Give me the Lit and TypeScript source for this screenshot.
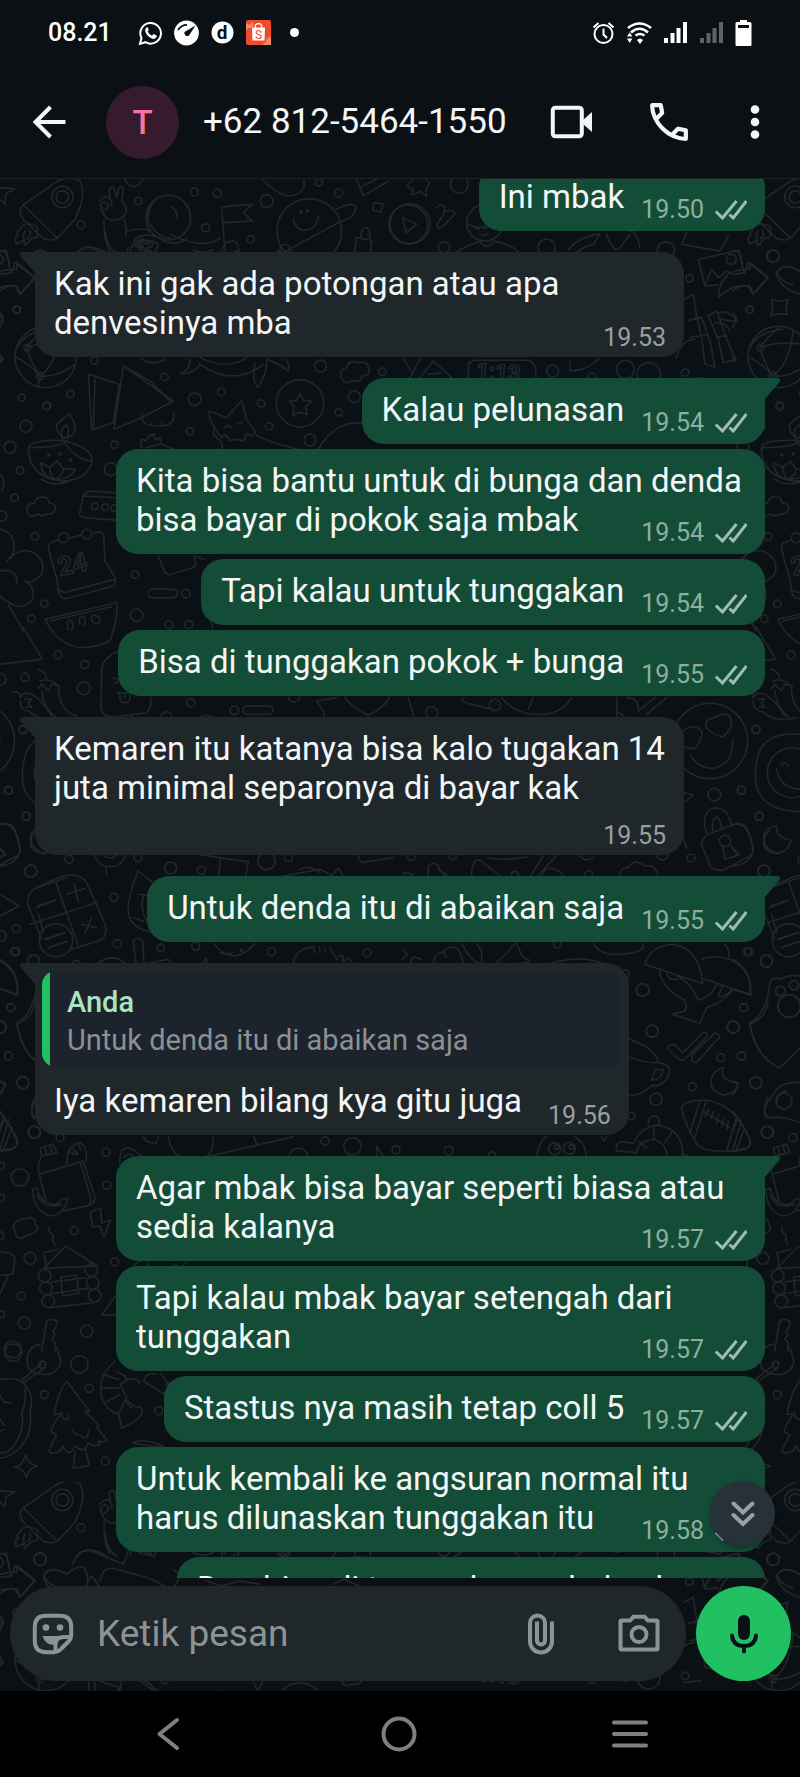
import { LitElement, html, css, svg, nothing } from "lit";
import { customElement, property } from "lit/decorators.js";
import { classMap } from "lit/directives/class-map.js";

interface Message {
  text: string;
  time: string;
  mine?: boolean;
  tail?: boolean;
  timeBelow?: boolean;
  quote?: { author: string; text: string };
}

const MESSAGES: Message[] = [
  { text: "Ini mbak", time: "19.50", mine: true },
  { text: "Kak ini gak ada potongan atau apa denvesinya mba", time: "19.53", tail: true },
  { text: "Kalau pelunasan", time: "19.54", mine: true, tail: true },
  { text: "Kita bisa bantu untuk di bunga dan denda bisa bayar di pokok saja mbak", time: "19.54", mine: true },
  { text: "Tapi kalau untuk tunggakan", time: "19.54", mine: true },
  { text: "Bisa di tunggakan pokok + bunga", time: "19.55", mine: true },
  {
    text: "Kemaren itu katanya bisa kalo tugakan 14 juta minimal separonya di bayar kak",
    time: "19.55",
    tail: true,
    timeBelow: true,
  },
  { text: "Untuk denda itu di abaikan saja", time: "19.55", mine: true, tail: true },
  {
    text: "Iya kemaren bilang kya gitu juga",
    time: "19.56",
    tail: true,
    quote: { author: "Anda", text: "Untuk denda itu di abaikan saja" },
  },
  { text: "Agar mbak bisa bayar seperti biasa atau sedia kalanya", time: "19.57", mine: true, tail: true },
  { text: "Tapi kalau mbak bayar setengah dari tunggakan", time: "19.57", mine: true },
  { text: "Stastus nya masih tetap coll 5", time: "19.57", mine: true },
  { text: "Untuk kembali ke angsuran normal itu harus dilunaskan tunggakan itu", time: "19.58", mine: true },
  { text: "Dan bisa di tunggakan pokok + bunga", time: "19.58", mine: true, timeBelow: true },
];

/* Wallpaper art: line drawings in thirds of a pixel, one sheet per area of the tile. */
interface Sheet {
  x: number;
  y: number;
  lines: string;
  rings: number[][];
}

const TILE_W = 733;
const TILE_H = 1303;

const SHEETS: Sheet[] = [
  {
    x: 0,
    y: -178,
    lines: `M70 612L165 545Q205 520 240 540Q262 580 225 655L172 712Q155 722 130 712L70 655Q58 640 62 622ZM70 612L172 712
      M85 668q-20 0-25 18q-15 5-5 15q-15 10-5 28l20-10 5 15 20-22q25 0 15-20q10-10-5-18zM75 690q-10 20 0 30M90 688q5 15-8 25
      M-5 560L45 563L18 578L15 610L-5 590
      M300 600q15-20 30-8L328 565q8-12 16 0L350 590L356 562q10-10 14 2L366 600q18 15 12 35Q365 660 335 658Q305 650 302 610q12-14 24 0q-2 16-14 16M326 592q14 4 8 22
      M312 655Q310 720 330 750M372 655q8 15 5 50M515 618q18 10 16 35M462 600Q440 630 445 660Q465 705 510 712
      M380 690Q420 680 445 688M400 720Q430 690 480 710Q510 740 560 715
      M665 618L757 610L730 635L757 660L670 665M665 618L675 750
      M880 655Q885 685 915 688Q950 685 955 648M1008 625Q1060 600 1068 618Q1065 650 1020 662Q950 700 850 755
      M1122 605L1150 608L1142 633L1118 628zM372 534Q400 580 430 534M785 534Q870 620 912 560V534M1070 534L1090 585L1165 540M1080 560L1130 534
      M1070 710l45 8-5 45-47-6zM1083 708q0-28 14-28q14 0 12 30`,
    rings: [[187,588,32],[187,588,19],[505,650,67],[583,573,12],[652,577,12],[415,600,11],[243,671,12],[617,680,12],[800,600,19],[1016,576,12],[957,544,11],[928,690,97],[903,633,3],[922,630,3],[1225,670,58]],
  },
  {
    x: 400,
    y: -178,
    lines: `M40 534L20 555L40 565L35 582L60 572L78 585L80 560L90 545L75 534M8 650L50 670L18 695z
      M110 620q15-18 25 0l-3 12 12-4q22 0 20 12L125 680q-18 5-12-12l22-35M200 668q60 30 85-25M225 680l12 5M250 682l12-2M240 700q15 8 25-3
      M245 720Q200 730 160 760M280 720Q340 730 360 760M240 722q20 28 42 0
      M505 745Q550 700 600 700L580 730Q540 740 520 765M620 700Q640 760 660 740L690 700M720 740Q710 690 690 690
      M860 695L845 730L960 750L985 705`,
    rings: [[178,550,27],[30,668,60],[255,665,55],[132,740,17],[440,740,26],[798,748,26]],
  },
  {
    x: 0,
    y: 52,
    lines: `M390 66Q395 30 425 28Q470 25 475 45L460 70M230 66Q260 30 320 66M665 66q5-38 35-35q20 5 15 35M850 66L832 60M315 0Q320 50 350 66M510 10Q620 60 660 20
      M0 60Q20 50 28 100M0 130Q30 125 35 125L45 95L103 140L60 190L45 165Q20 160 0 180M0 245L10 260L0 290M0 370L10 385L0 395
      M50 350Q80 300 150 295M80 350Q130 330 210 340M50 380Q90 400 120 435Q170 440 225 400M80 350Q95 400 120 435M80 350Q110 310 140 290M120 435Q170 400 180 300M120 435L115 465
      M265 430L357 460L340 575L275 597ZM285 445L280 590M370 405L490 490L520 510L425 560L342 595ZM370 405L450 450L515 515
      M427 545v20Q432 585 474 585Q520 585 521 560v-15M455 575v10M485 575v10M427 385q30 20 70 0
      M540 428Q570 420 570 385M540 428Q580 430 600 400Q700 470 790 400M600 380Q680 420 740 380M765 395Q755 460 775 468Q800 430 800 390M800 385Q840 400 865 420Q870 400 855 385
      M900 487l10 20 25 3-18 18 5 23-22-8-22 10 5-25-15-17 22-3z
      M1030 450q-20-30 10-40q5-25 35-15q30-5 30 15q10 25-20 25q0 20-30 15q-15 10-25 0z
      M628 540L680 560L725 508L740 565L765 600Q750 620 905 658M628 540Q625 570 645 590L640 610L665 635L668 658M650 600l15 20 10-10 15 20 20-5 20 5 10-20 20 5M675 590q10-10 20 0M710 580q10-10 18 0M955 655Q1010 560 1100 578
      M85 650Q90 625 190 628Q275 650 277 688Q265 750 180 750Q85 735 85 650M85 650Q180 650 200 630M190 628Q230 690 277 690
      M190 622Q165 600 170 580L208 548Q225 570 225 595Q222 620 190 622zM190 622q-15-25 10-40q12 25-2 40
      M122 695L150 710L172 690L190 715L225 715Q215 745 165 745Q125 740 122 695M150 710Q150 735 165 745Q185 735 190 715M125 745Q165 770 208 750
      M425 650L422 625L440 630L445 615L462 610L465 625L480 622L485 640L520 655M440 650L480 640
      M80 840q0-25 22-22q5-20 25-20q20 0 20 18q20 0 20 18q-5 18-25 15q-15 10-28 0q-30 15-34-9z
      M238 850L250 795L262 780L350 785M250 795L350 800M238 850q0 8 20 10L350 868
      M145 945Q145 935 175 928M205 922L245 912M275 907L300 903Q312 905 312 930L315 990L345 1040Q350 1060 340 1065L200 1103Q180 1105 175 1080L170 1040Q150 980 145 945M175 1075Q190 1090 210 1080L345 1045
      M20 990Q60 945 100 965Q140 990 125 1030Q90 1065 75 1050Q110 1070 95 1110Q60 1140 30 1115Q-10 1100 -5 1070M0 895Q60 910 35 980M50 1060Q55 1010 0 1020M25 1120L70 1200M0 730Q20 745 5 780
      M457 1075h62a12 12 0 0 1 0 25h-62a12 12 0 0 1 0-25zM475 975L495 1025Q505 1035 520 1028L585 1008Q590 990 580 975M585 975L612 985M610 1045L625 1040M615 1155L630 1160L640 1200
      M135 1165L350 1115Q355 1160 330 1230Q290 1250 240 1250Q170 1240 135 1165M150 1170L335 1127M205 1195q-8-30 6-28q14 10 4 30M240 1180q-6-25 8-25q16 16 2 28M275 1170q-4-18 10-18q20 10 14 24q-12 6-24-6`,
    rings: [[137,378,92],[82,350,10],[120,435,11],[50,236,11],[283,388,11],[494,438,11],[65,500,11],[140,525,11],[211,489,11],[78,586,18],[584,505,19],[664,483,11],[570,601,11],[343,641,11],[783,517,11],[807,586,11],[1016,544,11],[930,627,18],[1063,497,18],[961,405,18],[1147,422,11],[30,649,18],[60,718,11],[44,800,11],[332,715,19],[105,916,11],[405,1031,11],[410,1153,19],[133,1118,11],[94,1163,11],[558,1088,13],[507,1181,12],[566,1181,12],[4,855,16],[752,25,11],[900,517,71],[284,826,10],[315,829,10],[343,831,10],[146,672,3],[180,669,3],[211,687,3],[190,920,15],[260,910,15],[855,55,15]],
  },
  {
    x: 400,
    y: 52,
    lines: `M895 85L1018 58L1030 120M895 85L915 165L955 162M915 160L935 115L955 140L980 120L990 125M955 200Q960 110 1050 115L1050 95L1105 140L1060 190L1050 165Q1000 155 955 200
      M1130 125Q1150 90 1200 120M1130 125Q1135 170 1200 190M1115 205Q1140 215 1165 205Q1155 230 1162 250Q1140 245 1112 255Q1122 230 1115 205
      M852 205L880 190L890 255L905 320L915 400L945 408L930 330L905 260L885 260M865 268L900 262M870 320L925 310M925 255L950 240L975 310L1005 385L970 395L955 325L925 255M950 320L978 312M955 245Q990 235 1010 270Q980 270 955 262M945 275Q975 270 990 300
      M830 380Q840 330 885 325M510 390V420Q560 420 595 385M205 440V400Q215 385 240 388H385Q410 395 408 440M10 385L40 430M60 385L30 440M60 440L100 390L155 440M85 430L125 425
      M850 445L905 440`,
    rings: [[868,142,11],[994,85,15],[1120,76,18],[1050,236,11],[855,425,11],[458,420,18],[676,415,27],[746,430,35],[575,437,11],[1140,525,11]],
  },
  {
    x: 0,
    y: 452,
    lines: `M70-10L128 85L0 100M60 200Q70 180 95 190Q130 210 155 255M60 210Q60 240 90 242Q120 275 190 260M120 150Q150 140 175 165Q175 240 230 255M125 180Q130 230 170 262M115 115q20 5 25 28M115 172l10-12 20 20 10-20 24 4M38 182q20 0 28 15M75 205l20 0-10 12 10 12-18 0
      M330 75Q340 60 385 60M330 75Q305 90 305 120L303 230Q305 258 340 258L440 245Q455 235 452 200M340 140l20 6-16 12M352 185h40M360 190v10q0 15 15 15q15 0 15-15v-10M375 190v12M365 258v10M395 255v10
      M742 225h64a12 12 0 0 1 0 25h-64a12 12 0 0 1 0-25zM950 210L970 240L975 262M950 210L1010 200M1035 200Q1060 235 1105 252Q1150 235 1168 200M480 262q5-20 20-20q18 0 14 20M600 260q20-15 40 0
      M110 600Q85 620 95 650Q110 670 140 668M0 580Q50 570 60 660Q50 700 0 705M0 655L15 668L0 680M0 790L57 825L0 855M318 710L320 730M605 672L745 692M662 682L656 735M745 690L738 735M820 740L960 715L1000 735M995 735L1015 712L1030 735M900 715q30-15 60 10M1075 675q5 25 20 18L1180 680
      M110 770L180 738Q235 720 260 755L315 880Q325 920 295 930L215 955M110 770Q80 785 83 820L125 925M168 755L235 945M90 880L290 815M110 830L165 808M200 790L255 772M222 757L235 812M245 880L290 890M275 860L255 908M135 925L195 905M145 950L200 932
      M415 720Q380 800 385 850Q400 900 470 905M415 720L455 752L485 750M415 790l40 5q-5 40 5 60M430 795q-10 40 10 75M400 860l30 10
      M400 930q15-15 28 0L432 1000M400 930L408 1000M440 998L505 985L515 1000M605 998L618 982L622 1000M290 1000Q340 960 378 1000M880 998Q885 950 945 948M990 950L1010 985q10-18 20-8l-2 15 20-12 10 18M940 950l5 15M958 948l2 15M975 950l0 12
      M640 938Q700 1010 765 938M660 965q25 10 40-2M0 985Q60 1020 50 1090L0 1075`,
    rings: [[174,72,12],[254,101,12],[75,139,12],[251,172,19],[0,145,18],[68,295,12],[572,215,12],[703,238,13],[882,195,18],[25,478,12],[78,556,12],[207,685,12],[92,720,18],[342,799,12],[512,711,18],[604,718,12],[414,680,12],[800,690,26],[865,680,12],[49,893,12],[4,915,15],[44,962,12],[100,990,18],[352,938,12],[482,950,11],[587,946,12],[815,962,12],[1101,965,12],[230,1000,12],[725,958,4],[168,928,50],[330,660,48],[330,655,26]],
  },
  {
    x: 400,
    y: 452,
    lines: `M25 200L42 260M185 200q0 15 30 20l60 15M305 200Q350 255 430 250Q490 245 515 200M400 200L385 235M650 260V200M650 240L680 262M680 200Q720 200 715 240M715 240L765 200M740 250L800 200
      M850 300Q880 275 905 300Q910 325 885 352Q865 355 848 345M918 290Q915 262 940 262Q955 250 985 250Q1005 280 985 300L970 318Q940 312 918 290M870 370Q890 410 935 412Q1000 405 998 325
      M1200 310Q1100 300 1075 370Q1055 450 1080 490Q1110 540 1200 542M1143 405q12-18 22 0M1130 415Q1140 470 1200 475
      M852 485L880 492L855 512M860 650L850 620M905 640Q905 620 925 610L1010 578Q1035 575 1045 600L1060 650Q1060 675 1040 680L970 718Q945 722 930 705ZM920 608Q905 560 925 540Q950 520 980 545L995 580M938 600Q935 560 950 558Q960 560 965 590M968 645L975 685L1017 672L988 640
      M1130 585Q1125 620 1175 628Q1160 670 1125 665Q1085 650 1092 610Q1105 585 1130 585
      M262 680Q290 690 380 678M390 738L430 675M410 738L468 675M425 738q5-30 35-25q25 5 30 25M85 738V705q20-20 35 10l15 22M115 715L150 738M215 738Q215 680 240 688L300 735M12 738V725L38 730V738M540 675q15 20 40 5M655 738Q665 705 685 710Q700 680 735 705Q770 700 775 738
      M1112 825L1165 808M1115 850L1130 905M1100 960M1135 925L1195 905M1145 950L1195 932M1110 770L1200 740
      M735 1000Q750 945 820 940Q900 955 908 1058ZM905 985Q940 970 990 985Q1060 1020 1052 1092L915 1045M778 1018Q785 1070 850 1105Q865 1120 855 1140L815 1150L900 1177L920 1130Q980 1110 1000 1072M800 1030Q810 1050 835 1045M830 1035Q870 1050 895 1108Q930 1100 950 1060M955 1095Q965 1070 970 1065M960 1098Q990 1090 995 1075M975 940q15 20 12 38
      M10 955l12 15-15 15M30 998L40 978 65 985M100 998Q105 960 130 965q10-20 30-15Q180 945 190 998M130 960l10 20M185 938Q220 1000 245 998V960L230 938M290 995Q320 970 345 938M350 938Q370 990 385 985Q390 998 350 998M580 938Q600 975 660 970Q740 965 728 938M450 998Q540 970 610 998`,
    rings: [[95,245,18],[285,222,17],[930,330,113],[1177,425,75],[943,491,19],[1025,478,12],[1068,296,12],[1078,556,12],[975,630,17],[873,681,12],[1092,720,18],[345,732,11],[566,730,11],[787,670,17],[34,676,12],[158,675,11],[1046,962,12],[1100,990,18],[728,1077,19],[1032,1130,12],[1000,1188,18],[757,1200,18],[1141,1080,14],[1182,1063,14],[1168,1125,34],[675,1028,12],[472,940,11]],
  },
  {
    x: 0,
    y: 772,
    lines: `M105 150Q100 200 50 220Q70 300 105 330M0 390L15 400Q10 420 0 430M105 440Q85 480 105 500M0 480L50 560Q55 590 40 592L0 600M15 500L0 540M35 530L10 597
      M122 590L160 580L170 605L125 615ZM135 587l5 25M150 583l6 25M125 615Q110 640 118 670L250 630L285 740Q285 760 260 765L190 780M118 670L138 750M240 632L272 740Q275 755 262 765M200 640Q200 580 240 575Q265 590 258 630M205 600l25 12M215 588l18 20M235 578l8 20
      M98 715Q100 780 150 795Q195 790 203 742L185 745Q170 770 140 755Q115 740 112 712ZM110 730Q130 780 185 760
      M55 810q5-10 20-5l10-5q15-3 20 10l8 25q-5 8-15 12l-35 15q-10 0-15-10l-8-25q5-15 15-17zM270 785L302 772L305 815L332 808L312 858L300 825L278 828ZM148 828q-5 15 8 22q8 8 0 18l10 14
      M132 952L197 885L290 945ZM140 955L132 905L175 895M155 993L258 980M155 1028L265 1012M150 1070L280 1055M182 978l48-6 6 55-48 8zM0 902Q40 905 45 920L38 970L0 972M25 972L0 1030M305 1092L350 1030M305 1092H350
      M125 1200L140 1110Q155 1100 172 1112L165 1135 158 1140 165 1150 155 1165 165 1175 165 1200M90 1200q5-15 30-20
      M360 640Q355 590 385 590Q410 600 430 618M370 620Q390 600 400 618M505 557Q510 600 540 617M640 557Q640 600 620 617L880 557M762 557L770 580M430 557Q440 580 470 575L475 557M865 617q10-25 30-25q25 0 30 25M1130 617V585L1150 617
      M400 945L420 930M440 935l10 12M545 945l15-12M520 940l20 8`,
    rings: [[32,170,12],[0,228,18],[25,315,12],[68,395,18],[102,544,18],[180,560,12],[318,604,12],[60,679,26],[321,703,12],[223,839,12],[0,645,12],[0,741,12],[0,854,12],[90,922,18],[344,933,12],[64,1035,12],[73,1116,18],[260,1140,18],[134,974,19],[274,957,19],[138,1012,19],[278,996,19],[145,1051,19],[284,1034,19],[38,1195,25],[4,1090,10],[975,570,12],[1057,586,26],[1188,596,12]],
  },
  {
    x: 400,
    y: 772,
    lines: `M690 265Q760 290 775 330Q770 345 690 320M775 335Q815 340 808 365Q795 405 760 405M690 435Q730 430 760 400M765 355L790 358Q785 385 755 388ZM808 285q15-10 20 0l20 20 60-60q15-5 12 12l-65 68q-10 8-20-2l-30-28q-4-6 3-10zM875 320q0-8 8-15l60-58q15-3 15 12l-65 72q-18 10-18-11zM900 308
      M970 350Q955 390 1015 395Q1010 430 970 432Q925 420 935 380Q945 355 970 350
      M845 470Q855 445 920 448Q1010 460 1052 575Q1050 600 990 600Q900 605 885 570Q850 510 845 470M900 450L870 545M918 452L885 560M1010 495L980 600M1025 505L998 600M912 482L990 530M925 475l-10 22M940 482l-8 22M957 492l-8 25M972 502l-8 25M985 512l-5 25
      M650 600q-5-25 15-28l35 5Q720 530 770 522Q830 530 845 580L850 617M745 520q0-25 18-25q18 0 15 30M650 600L710 605Q715 570 765 565Q800 580 802 617M715 572L740 590M762 525V565M815 545L795 575M845 610l20 5M410 617Q420 560 440 557M525 557Q560 580 558 617
      M1110 95Q1120 75 1145 85Q1160 70 1200 75M1110 95Q1100 190 1050 215Q1060 310 1138 352Q1190 300 1200 290M1200 395Q1140 390 1120 430Q1080 480 1100 500Q1150 495 1200 515M1130 460q0-35 30-40M605 557l8 12 8-12`,
    rings: [[728,117,19],[757,241,18],[768,445,18],[1000,228,18],[1024,315,12],[962,320,12],[877,407,12],[1068,395,18],[1103,544,18],[694,495,11],[464,593,18],[508,592,18],[470,588,7],[514,588,7],[146,599,13],[277,613,11],[1141,120,14],[1182,102,14],[1168,165,34],[1152,450,24]],
  },
  {
    x: 0,
    y: 1172,
    lines: `M85 50Q75 10 95-10M85 50Q100 75 150 70Q190 50 180 20L170-10M135 50L70 95M125 38L65 88M0 85Q50 75 75 100Q105 140 90 180Q100 250 60 290Q30 320 0 322M75 110Q80 150 65 185Q75 230 50 270Q30 310 0 305M0 135l12 18 20 2M0 205l15 20M0 240l12-5
      M200 90Q175 120 162 190Q180 190 185 185Q150 230 155 245L170 250L147 300Q150 312 180 300L190 285Q200 310 215 302L225 285Q240 300 255 295L265 275Q280 290 300 280L295 270Q310 275 322 268L290 230L298 225L255 180L270 182ZM185 190q5 20 20 15l0-15M218 235q5 20 25 18q0 12 20 5l2-20M225 300L220 352L268 345L255 290
      M345 30Q290 80 305 140Q320 180 355 190L380 140L360 100L380 90L375 75L350 62M305 70l50 15M303 110l55 0M315 155l45-25M355 185L365 230Q400 220 425 190Q430 160 410 170L380 150M380 155L395 170M380 85Q420 80 418 100M430 90Q440 60 470 70M430 90Q460 110 510 140M480 65L510 105
      M398 275Q430 260 490 285Q470 290 398 275M43 348Q70 345 76 312Q85 340 112 345Q85 352 80 380Q72 352 43 348`,
    rings: [[40,5,26],[238,40,26],[127,41,10],[133,131,12],[267,112,12],[316,330,12],[476,179,12],[505,100,6]],
  },
  {
    x: 0,
    y: -131,
    lines: `M217 640Q240 590 275 600L370 640L385 600M130 680Q140 640 200 670Q260 620 262 680Q270 710 240 710M135 680Q150 705 180 710M262 690L275 675L300 708M300 690Q310 640 350 655L440 680Q490 700 500 710M520 655l20 20-15 30M620 690L665 705 720 690 780 700M580 605q30 15 60 0M700 615l15-10M1000 700l30-15 50 20`,
    rings: [[120,625,19]],
  },
];

const ringPath = ([cx, cy, r]: number[]) =>
  `M${cx - r} ${cy}a${r} ${r} 0 1 0 ${2 * r} 0a${r} ${r} 0 1 0 ${-2 * r} 0`;

const sheetArt = (dx: number) => svg`
  <g transform="translate(${dx} 0)">
    ${SHEETS.map(
      (s) => svg`<path transform="translate(${s.x} ${s.y}) scale(.3333)" d="${s.lines} ${s.rings.map(ringPath).join("")}"/>`
    )}
    <text class="doodle" font-size="26" transform="translate(60 397) rotate(-12)">24</text>
    <text class="doodle" font-size="16" transform="translate(134 70) rotate(12)">42</text>
    <text class="doodle" font-size="22" transform="translate(476 199) rotate(4)">1:13</text>
  </g>`;

@customElement("chat-wallpaper")
export class ChatWallpaper extends LitElement {
  static styles = css`
    :host {
      position: absolute;
      inset: 0;
      overflow: hidden;
    }
    .art {
      display: block;
      width: 100%;
      height: 100%;
    }
    .tile {
      fill: none;
      stroke: #21272b;
      stroke-width: 4.5;
      stroke-linejoin: round;
      stroke-linecap: round;
    }
    .doodle {
      font-family: Roboto, sans-serif;
      font-weight: 700;
      stroke-width: 1.4;
    }
  `;
  render() {
    return html`<svg class="art" aria-hidden="true">
      <defs>
        <pattern id="tile" width=${TILE_W} height=${TILE_H} patternUnits="userSpaceOnUse">
          <g class="tile">${[-TILE_W, 0, TILE_W].map(sheetArt)}</g>
        </pattern>
      </defs>
      <rect width="100%" height="100%" fill="url(#tile)" />
    </svg>`;
  }
}

@customElement("chat-bubble")
export class ChatBubble extends LitElement {
  @property({ attribute: false }) message!: Message;

  static styles = css`
    :host {
      display: flex;
      padding: 0 35px;
    }
    .bubble {
      position: relative;
      display: flow-root;
      max-width: 649px;
      box-sizing: border-box;
      padding: 12px 18px 4px 19px;
      border-radius: 22px;
      background: #1f272a;
      color: #f3f5f6;
      font-size: 33px;
      line-height: 39px;
    }
    .mine {
      margin-left: auto;
      padding: 12px 18px 6px 20px;
      background: #144d37;
    }
    .tail {
      border-top-left-radius: 0;
    }
    .mine.tail {
      border-top-left-radius: 22px;
      border-top-right-radius: 0;
    }
    .quoting {
      padding-top: 8px;
    }
    .beak {
      position: absolute;
      top: 0;
      right: 100%;
      width: 15px;
      height: 22px;
      fill: #1f272a;
    }
    .mine .beak {
      right: auto;
      left: 100%;
      fill: #144d37;
      transform: scaleX(-1);
    }
    .meta {
      float: right;
      display: flex;
      align-items: center;
      gap: 11px;
      margin: 20px 0 0 26px;
      color: #9b9fa2;
      font-size: 25px;
      line-height: 30px;
    }
    .mine .meta {
      margin: 18px 0 0 17px;
      color: #8caf9f;
    }
    .below .text {
      display: block;
    }
    .below .meta {
      margin-top: 14px;
    }
    .ticks {
      width: 32px;
      height: 20px;
      fill: none;
      stroke: #a0bdb1;
      stroke-width: 3;
    }
    .quote {
      margin: 0 -11px 14px -12px;
      padding: 12px 20px 7px 25px;
      border-radius: 14px;
      background: linear-gradient(to right, #21c063 8px, #1d232c 8px);
      color: #8b9094;
      font-size: 29px;
      line-height: 38px;
    }
    .author {
      display: block;
      color: #a9e4c0;
      font-weight: 500;
    }
    .quoted {
      display: block;
      line-height: 39px;
    }
  `;

  render() {
    const m = this.message;
    const cls = { bubble: true, mine: !!m.mine, tail: !!m.tail, below: !!m.timeBelow, quoting: !!m.quote };
    return html`<div class=${classMap(cls)}>${m.tail
      ? html`<svg class="beak" viewBox="0 0 15 22" aria-hidden="true"><path d="M15 0H3Q-1.500 0 .8 4.500L15 21z" /></svg>`
      : nothing}${m.quote
      ? html`<div class="quote"><span class="author">${m.quote.author}</span><span class="quoted">${m.quote.text}</span></div>`
      : nothing}<span class="text">${m.text}</span><span class="meta"><time>${m.time}</time>${m.mine
      ? html`<svg class="ticks" viewBox="0 0 32 20" role="img" aria-label="Terkirim">
          <path d="M.8 11.500L7.500 18L21.500 1M14.500 14.500L18.200 18L31.500 1" />
        </svg>`
      : nothing}</span></div>`;
  }
}

@customElement("status-bar")
export class StatusBar extends LitElement {
  static styles = css`
    :host {
      display: flex;
      align-items: center;
      justify-content: space-between;
      height: 66px;
      padding: 0 48px;
      color: #fff;
      font-size: 25px;
      font-weight: 500;
      line-height: 28px;
    }
    .side {
      display: flex;
      align-items: center;
      gap: 11px;
    }
    .clock {
      margin-right: 15px;
    }
    .icon {
      display: block;
      width: 25px;
      height: 26px;
      fill: currentColor;
    }
    .battery {
      width: 17px;
    }
    .line {
      fill: none;
      stroke: currentColor;
      stroke-width: 2;
    }
    .dim {
      opacity: 0.35;
    }
    .letter {
      font-weight: 700;
      fill: #0b1014;
    }
    .s {
      font-weight: 400;
      fill: #ee4d2d;
    }
  `;
  render() {
    const bars = svg`<path d="M1 18h4v5H1zM7.500 13h4v10h-4zM13.500 8h4v15h-4zM20 2h4v21h-4z"/>`;
    return html`
      <div class="side">
        <time class="clock">08.21</time>
        <svg class="icon" viewBox="0 0 25 26" aria-label="WhatsApp" role="img">
          <path class="line" d="M2 23.800L3.500 18A10.300 10.300 0 1 1 7.500 22.200z" />
          <path d="M8.500 7.500q-2 1.500-1.200 4.200q2 5.500 7.700 7.200q2.800.3 3.800-2.300l-.2-1.200-3-1.300-1.600 1.600q-3-1.200-4.400-4.100l1.200-1.500-1.200-2.800z" />
        </svg>
        <svg class="icon" viewBox="0 0 25 26" aria-hidden="true">
          <circle cx="12.500" cy="13" r="12.400" />
          <path d="M4 10Q7 4.800 13 4.800" fill="none" stroke="#0b1014" stroke-width="1.800" />
          <path d="M21.500 5.500L15 15.500A3 3 0 0 1 10.500 12z" fill="#0b1014" />
        </svg>
        <svg class="icon" viewBox="0 0 25 26" aria-hidden="true">
          <circle cx="12.500" cy="12.500" r="11" />
          <text class="letter" x="12" y="19" font-size="19" text-anchor="middle">d</text>
        </svg>
        <svg class="icon" viewBox="0 0 25 26" aria-hidden="true">
          <rect x="0" y="0" width="25" height="25" rx="2" fill="#ee4d2d" />
          <path d="M0 3l3 2 3-3 2 3-3 3-3 0-2 3zM25 17l-4 1-1 4-4 3h9z" fill="#f58a6c" />
          <path d="M6 7.500H19L18.500 20.500H6.500z" />
          <path d="M9.200 8V7a3.300 3.300 0 0 1 6.600 0v1" fill="none" stroke="#fff" stroke-width="1.200" />
          <text class="s" x="12.500" y="18.500" font-size="12" text-anchor="middle">S</text>
        </svg>
        <svg class="icon" viewBox="0 0 25 26" aria-hidden="true"><circle cx="12.500" cy="12.500" r="4.500" /></svg>
      </div>
      <div class="side">
        <svg class="icon" viewBox="0 0 25 26" role="img" aria-label="Alarm">
          <circle class="line" cx="12.500" cy="14" r="9" />
          <path class="line" d="M12.500 8.500V14.500L16 18M2.500 7.500L7.500 3M22.500 7.500L17.500 3" />
        </svg>
        <svg class="icon" viewBox="0 0 25 26" role="img" aria-label="Wi-Fi">
          <path d="M1 8Q12.500-1 24 8M4 12.500Q12.500 5 21 12.500M8.500 15.500Q13 12.500 17.500 15.500" fill="none" stroke="currentColor" stroke-width="2.600" />
          <path d="M10 20q3-3 6 0l-3 4zM0 16.500L2.700 12.500L5.400 16.500zM0 18.500h5.400L2.700 23z" />
        </svg>
        <svg class="icon" viewBox="0 0 25 26" role="img" aria-label="Sinyal 1">${bars}</svg>
        <svg class="icon dim" viewBox="0 0 25 26" role="img" aria-label="Sinyal 2">${bars}</svg>
        <svg class="icon battery" viewBox="4 0 17 26" role="img" aria-label="Baterai">
          <path fill-rule="evenodd" d="M9 0h7v2h3q1.500 0 1.500 1.500v21q0 1.500-1.500 1.500H6q-1.500 0-1.500-1.500v-21Q4.500 2 6 2h3zM7 5v3h11V5z" />
        </svg>
      </div>
    `;
  }
}

@customElement("app-root")
export class AppRoot extends LitElement {
  static styles = css`
    :host {
      display: flex;
      flex-direction: column;
      height: 100vh;
      overflow: hidden;
      background: #0b1014;
      font-family: Roboto, sans-serif;
      color: #f3f5f6;
    }
    button {
      display: grid;
      place-items: center;
      flex: none;
      margin: 0;
      padding: 0;
      border: 0;
      background: none;
      color: inherit;
      font: inherit;
      cursor: pointer;
    }
    svg {
      display: block;
    }
    .header {
      display: flex;
      align-items: center;
      height: 112px;
      padding: 0 26px 0 27px;
      border-bottom: 1px solid #1c2226;
    }
    .back {
      width: 44px;
    }
    .avatar {
      display: grid;
      place-items: center;
      flex: none;
      width: 73px;
      height: 73px;
      margin: 0 24px 0 35px;
      border-radius: 50%;
      background: #361a2d;
      color: #fc72a2;
      font-size: 33px;
      font-weight: 500;
    }
    .name {
      flex: 1;
      margin: 0;
      font-size: 35px;
      font-weight: 400;
      line-height: 42px;
      white-space: nowrap;
    }
    .actions {
      display: flex;
      align-items: center;
      gap: 56px;
    }
    .stage {
      position: relative;
      display: flex;
      flex: 1;
      flex-direction: column;
      min-height: 0;
    }
    .chat {
      position: relative;
      flex: 1;
      min-height: 0;
      overflow: hidden;
    }
    .list {
      display: flex;
      flex-direction: column;
      gap: 5px;
      margin: -14px 0 0;
      padding: 0;
    }
    .turn {
      margin-top: 16px;
    }
    .jump {
      position: absolute;
      right: 25px;
      bottom: 32px;
      width: 65px;
      height: 65px;
      border-radius: 50%;
      background: #26313a;
      box-shadow: 0 2px 5px rgba(0, 0, 0, 0.35);
      color: #999fa4;
    }
    .composer {
      position: relative;
      display: flex;
      align-items: center;
      gap: 10px;
      padding: 8px 9px 10px 10px;
    }
    .field {
      display: flex;
      align-items: center;
      flex: 1;
      min-width: 0;
      height: 95px;
      box-sizing: border-box;
      padding: 0 24px 0 20px;
      border-radius: 48px;
      background: #1f272a;
      color: #8c9397;
    }
    .input {
      flex: 1;
      min-width: 0;
      padding: 0;
      margin-left: 21px;
      border: 0;
      outline: 0;
      background: none;
      color: #f3f5f6;
      font: 400 37px/44px Roboto, sans-serif;
    }
    .input::placeholder {
      color: #8c9397;
      opacity: 1;
    }
    .attach {
      margin-right: 52px;
    }
    .mic {
      width: 95px;
      height: 95px;
      border-radius: 50%;
      background: #21c063;
      color: #0b1014;
    }
    .nav {
      display: grid;
      grid-template-columns: repeat(3, 1fr);
      height: 86px;
      padding: 0 54px 0 52px;
      background: #000;
      color: #7f7f7f;
    }
  `;

  render() {
    return html`
      <status-bar></status-bar>
      <header class="header">
        <button class="back" aria-label="Kembali">
          <svg width="34" height="34" viewBox="0 0 34 34" fill="none" stroke="currentColor" stroke-width="4"><path d="M18.500 2L3.500 17L18.500 32M3.500 17H33.500" /></svg>
        </button>
        <div class="avatar" aria-hidden="true">T</div>
        <h1 class="name">+62 812-5464-1550</h1>
        <div class="actions">
          <button aria-label="Panggilan video">
            <svg width="43" height="34" viewBox="0 0 43 34"><rect x="2.800" y="2.800" width="29" height="28.400" rx="2.500" fill="none" stroke="currentColor" stroke-width="4" /><path d="M33 15L42 7V27L33 19z" fill="currentColor" /></svg>
          </button>
          <button aria-label="Panggilan suara">
            <svg width="40" height="40" viewBox="2.500 2.500 19 19" fill="currentColor"><path d="M19.950 21q-3.125 0-6.175-1.362t-5.550-3.863-3.862-5.550T3 4.050q0-.45.3-.75t.75-.3H8.100q.35 0 .625.238t.325.562l.65 3.500q.05.4-.025.675T9.400 8.450L6.975 10.900q.5.925 1.187 1.787t1.513 1.663q.775.775 1.625 1.438T13.100 17l2.350-2.350q.225-.225.588-.337t.712-.063l3.450.7q.35.1.575.363T21 15.900v4.050q0 .45-.3.75t-.75.3M6.025 9l1.650-1.650L7.250 5H5.025q.125 1.025.35 2.025T6.025 9m8.950 8.950q.975.425 1.988.675T19 18.950v-2.200l-2.350-.475z" /></svg>
          </button>
          <button aria-label="Menu lainnya">
            <svg width="29" height="34" viewBox="5 0 29 34" fill="currentColor"><circle cx="15" cy="4.500" r="4.300" /><circle cx="15" cy="17" r="4.300" /><circle cx="15" cy="29.500" r="4.300" /></svg>
          </button>
        </div>
      </header>
      <main class="stage">
        <chat-wallpaper></chat-wallpaper>
        <section class="chat" aria-label="Percakapan">
          <div class="list">
            ${MESSAGES.map((m) => html`<chat-bubble class=${classMap({ turn: !!m.tail })} .message=${m}></chat-bubble>`)}
          </div>
          <button class="jump" aria-label="Gulir ke bawah">
            <svg width="24" height="26" viewBox="0 0 24 26" fill="none" stroke="currentColor" stroke-width="4" stroke-linecap="round"><path d="M2.500 2.500L12 11.500L21.500 2.500M2.500 14L12 23L21.500 14" /></svg>
          </button>
        </section>
        <form class="composer" @submit=${(e: Event) => e.preventDefault()}>
          <div class="field">
            <button type="button" aria-label="Stiker">
              <svg width="46" height="46" viewBox="0 0 46 46">
                <path d="M16 4.800H30Q41.200 4.800 41.200 16V24Q41.200 28 38 31L31 38Q28 41.200 24 41.200H16Q4.800 41.200 4.800 30V16Q4.800 4.800 16 4.800z" fill="none" stroke="currentColor" stroke-width="4" />
                <circle cx="16" cy="16.500" r="3.300" fill="currentColor" /><circle cx="30" cy="16.500" r="3.300" fill="currentColor" />
                <path d="M12.500 25H35Q26 26 25 34Q15 34 12.500 25z" fill="currentColor" />
                <path d="M25.500 41V34Q25.500 26 33.500 26H41" fill="none" stroke="currentColor" stroke-width="4" />
              </svg>
            </button>
            <input class="input" type="text" placeholder="Ketik pesan" aria-label="Ketik pesan" />
            <button class="attach" type="button" aria-label="Lampirkan">
              <svg width="46" height="46" viewBox="0 0 46 46" fill="none" stroke="currentColor" stroke-width="4"><path d="M34 10.500V30.500A11 11 0 0 1 12 30.500V12A7.500 7.500 0 0 1 27 12V29.500A4 4 0 0 1 19 29.500V10.500" /></svg>
            </button>
            <button type="button" aria-label="Kamera">
              <svg width="46" height="46" viewBox="0 0 46 46" fill="none" stroke="currentColor" stroke-width="4"><path d="M5.500 9.500H14L17.500 5.800H28.500L32 9.500H40.500Q41.500 9.500 41.500 10.500V37.500Q41.500 38.500 40.500 38.500H5.500Q4.500 38.500 4.500 37.500V10.500Q4.500 9.500 5.500 9.500z" /><circle cx="23" cy="23.500" r="7.500" /></svg>
            </button>
          </div>
          <button class="mic" type="button" aria-label="Rekam pesan suara">
            <svg width="30" height="42" viewBox="0 0 30 42" fill="none" stroke="currentColor" stroke-width="4" stroke-linecap="round"><rect x="9" y="2" width="12" height="25" rx="6" fill="currentColor" stroke="none" /><path d="M3 22.500Q4 33 15 33T27 22.500M15 33V38.500" /></svg>
          </button>
        </form>
      </main>
      <nav class="nav" aria-label="Navigasi sistem">
        <button aria-label="Kembali">
          <svg width="24" height="34" viewBox="0 0 24 34" fill="none" stroke="currentColor" stroke-width="4" stroke-linecap="round" stroke-linejoin="round"><path d="M21 3L3.500 17L21 31" /></svg>
        </button>
        <button aria-label="Beranda">
          <svg width="36" height="36" viewBox="0 0 36 36" fill="none" stroke="currentColor" stroke-width="4"><circle cx="18" cy="18" r="15.500" /></svg>
        </button>
        <button aria-label="Aplikasi terbaru">
          <svg width="36" height="28" viewBox="0 0 36 28" fill="none" stroke="currentColor" stroke-width="4" stroke-linecap="round"><path d="M2 2.500H34M2 14H34M2 25.500H34" /></svg>
        </button>
      </nav>
    `;
  }
}
